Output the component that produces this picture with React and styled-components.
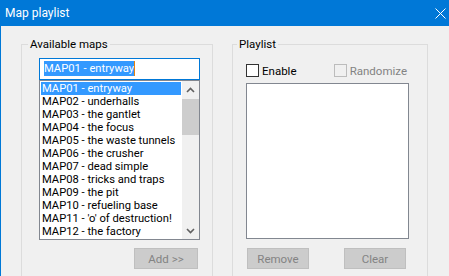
import React from "react";
import styled, { createGlobalStyle } from "styled-components";

const Global = createGlobalStyle`
  html, body { margin: 0; padding: 0; background: #f0f0f0; }
  body { font-family: Roboto, "Noto Sans", Arial, sans-serif; font-size: 11px; }
`;

const Window = styled.div`
  width: 449px;
  height: 276px;
  overflow: hidden;
  background: #f0f0f0;
  box-sizing: border-box;
  border-left: 1px solid #0078d7;
`;

const TitleBar = styled.div`
  height: 26px;
  margin-left: -1px;
  background: #0078d7;
  display: flex;
  align-items: center;
  padding-left: 5px;
  color: #fff;
  font-size: 12px;
`;

const TitleText = styled.span`
  flex: 1;
  line-height: 16px;
`;

const CloseBtn = styled.div`
  width: 14px;
  height: 26px;
  display: flex;
  align-items: center;
  justify-content: center;
  margin-right: 2px;
`;

const Body = styled.div`
  display: flex;
  padding: 11px 0 0 20px;
  gap: 19px;
`;

const Group = styled.fieldset`
  margin: 0;
  box-sizing: border-box;
  width: ${(p) => p.$w}px;
  height: 260px;
  border: 1px solid #dcdcdc;
  padding: 0 0 0 ${(p) => p.$pl}px;
  min-width: 0;
`;

const Legend = styled.legend`
  padding: 0 2px;
  font-size: 11.5px;
  line-height: 14px;
  color: #000;
`;

const Inner = styled.div`
  display: flex;
  flex-direction: column;
  padding: ${(p) => p.$pt}px ${(p) => p.$pr}px 0 ${(p) => p.$pl}px;
`;

const Edit = styled.div`
  height: 22px;
  box-sizing: border-box;
  border: 1px solid #0078d7;
  background: #fff;
  padding: 2px 0 0 4px;
  display: flex;
  align-items: flex-start;
`;

const Sel = styled.span`
  background: #3399ff;
  color: #fff;
  line-height: 15px;
  height: 15px;
  font-size: 11.2px;
  white-space: nowrap;
`;

const Caret = styled.span`
  width: 1px;
  height: 15px;
  background: #e8820c;
`;

const ListBox = styled.div`
  box-sizing: border-box;
  height: ${(p) => p.$h}px;
  margin-top: ${(p) => p.$mt || 0}px;
  border: 1px solid #828790;
  background: #fff;
  display: flex;
`;

const Items = styled.div`
  flex: 1;
  padding: 1px 1px 0 1px;
  overflow: hidden;
`;

const Item = styled.div`
  height: 13px;
  line-height: 13px;
  padding-left: 1px;
  font-size: 11.2px;
  white-space: nowrap;
  color: ${(p) => (p.$sel ? "#fff" : "#000")};
  background: ${(p) => (p.$sel ? "#3399ff" : "transparent")};
`;

const ScrollBar = styled.div`
  width: 17px;
  background: #f0f0f0;
  display: flex;
  flex-direction: column;
`;

const ArrowBtn = styled.div`
  height: 17px;
  display: flex;
  align-items: center;
  justify-content: center;
`;

const Thumb = styled.div`
  margin-top: 1px;
  height: 36px;
  background: #cdcdcd;
`;

const Spacer = styled.div`
  flex: 1;
`;

const ButtonRow = styled.div`
  display: flex;
  justify-content: ${(p) => p.$justify || "flex-end"};
  margin-top: ${(p) => p.$mt}px;
  padding: 0 ${(p) => p.$pr}px 0 ${(p) => p.$pl}px;
`;

const Button = styled.div`
  box-sizing: border-box;
  width: ${(p) => p.$w}px;
  height: 21px;
  background: #cccccc;
  border: 1px solid #bfbfbf;
  color: #838383;
  display: flex;
  align-items: center;
  justify-content: center;
  font-size: 11.5px;
`;

const CheckRow = styled.div`
  display: flex;
  align-items: center;
  height: 15px;
  padding-right: 2px;
`;

const Check = styled.label`
  display: flex;
  align-items: center;
  gap: 3px;
  font-size: 11.5px;
  color: ${(p) => (p.$disabled ? "#838383" : "#000")};
  margin-left: ${(p) => (p.$right ? "auto" : "0")};
`;

const Box = styled.span`
  width: 13px;
  height: 13px;
  box-sizing: border-box;
  border: 1px solid ${(p) => (p.$disabled ? "#bcbcbc" : "#333333")};
  background: ${(p) => (p.$disabled ? "#f0f0f0" : "#fff")};
`;

const Chevron = ({ up }) => (
  <svg width="9" height="6" viewBox="0 0 9 6">
    <polyline
      points={up ? "1,5 4.5,1.5 8,5" : "1,1 4.5,4.5 8,1"}
      fill="none"
      stroke="#606060"
      strokeWidth="1.6"
    />
  </svg>
);

const maps = [
  "MAP01 - entryway",
  "MAP02 - underhalls",
  "MAP03 - the gantlet",
  "MAP04 - the focus",
  "MAP05 - the waste tunnels",
  "MAP06 - the crusher",
  "MAP07 - dead simple",
  "MAP08 - tricks and traps",
  "MAP09 - the pit",
  "MAP10 - refueling base",
  "MAP11 - 'o' of destruction!",
  "MAP12 - the factory",
];

export default function App() {
  return (
    <>
      <Global />
      <Window>
        <TitleBar>
          <TitleText>Map playlist</TitleText>
          <CloseBtn>
            <svg width="11" height="11" viewBox="0 0 11 11">
              <path d="M0.5 0.5 L10.5 10.5 M10.5 0.5 L0.5 10.5" stroke="#fff" strokeWidth="1" />
            </svg>
          </CloseBtn>
        </TitleBar>
        <Body>
          <Group $w={192} $pl={6}>
            <Legend>Available maps</Legend>
            <Inner $pt={7} $pr={12} $pl={11}>
              <Edit>
                <Sel>MAP01 - entryway</Sel>
                <Caret />
              </Edit>
              <ListBox $h={160}>
                <Items>
                  {maps.map((m, i) => (
                    <Item key={m} $sel={i === 0}>{m}</Item>
                  ))}
                </Items>
                <ScrollBar>
                  <ArrowBtn><Chevron up /></ArrowBtn>
                  <Thumb />
                  <Spacer />
                  <ArrowBtn><Chevron /></ArrowBtn>
                </ScrollBar>
              </ListBox>
              <ButtonRow $mt={8} $pr={2} $pl={0}>
                <Button $w={64}>Add &gt;&gt;</Button>
              </ButtonRow>
            </Inner>
          </Group>
          <Group $w={196} $pl={4}>
            <Legend>Playlist</Legend>
            <Inner $pt={12} $pr={18} $pl={9}>
              <CheckRow>
                <Check><Box />Enable</Check>
                <Check $right $disabled><Box $disabled />Randomize</Check>
              </CheckRow>
              <ListBox $h={156} $mt={5} />
              <ButtonRow $mt={9} $pr={3} $pl={1} $justify="space-between">
                <Button $w={62}>Remove</Button>
                <Button $w={62}>Clear</Button>
              </ButtonRow>
            </Inner>
          </Group>
        </Body>
      </Window>
    </>
  );
}
